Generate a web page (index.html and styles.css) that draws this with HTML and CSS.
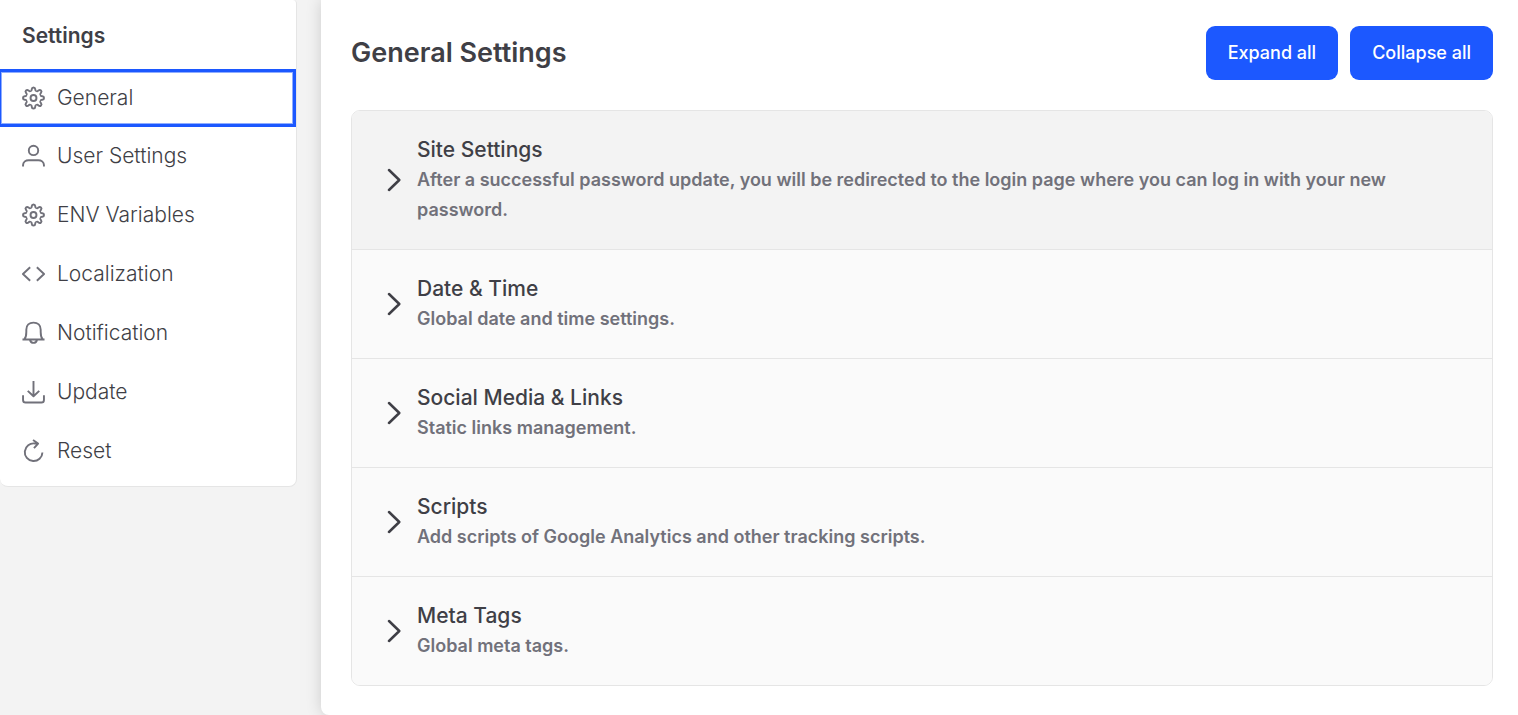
FILE: index.html
```html
<!DOCTYPE html>
<html lang="en">
<head>
<meta charset="utf-8">
<meta name="viewport" content="width=device-width, initial-scale=1">
<title>General Settings</title>
<link rel="stylesheet" href="styles.css">
</head>
<body>
<svg class="sprite" aria-hidden="true">
  <defs>
    <path id="tooth" d="M-3.200-7.700C-2.200-7.300-1.900-8-1.800-9.200C-1.600-11.600 1.600-11.600 1.800-9.200C1.900-8 2.200-7.300 3.200-7.700"/>
    <symbol id="gear" viewBox="-12 -12 24 24">
      <use href="#tooth"/>
      <use href="#tooth" transform="rotate(45)"/>
      <use href="#tooth" transform="rotate(90)"/>
      <use href="#tooth" transform="rotate(135)"/>
      <use href="#tooth" transform="rotate(180)"/>
      <use href="#tooth" transform="rotate(225)"/>
      <use href="#tooth" transform="rotate(270)"/>
      <use href="#tooth" transform="rotate(315)"/>
      <circle r="3.1"/>
    </symbol>
    <symbol id="chevron" viewBox="0 0 14 24"><path d="M2 2 12.300 12 2 22"/></symbol>
  </defs>
</svg>
<div class="layout">
  <aside class="sidebar">
    <h2 class="sidebar-title">Settings</h2>
    <nav class="menu" aria-label="Settings">
      <a class="menu-item is-active" href="#general" aria-current="page"><svg class="icon"><use href="#gear"/></svg>General</a>
      <a class="menu-item" href="#user"><svg class="icon" viewBox="0 0 24 24"><circle cx="12" cy="6.2" r="4.9"/><path d="M1.100 23v-1.500C1.100 18.300 4 16.500 7 16.500h10c3 0 5.900 1.800 5.900 5V23"/></svg>User Settings</a>
      <a class="menu-item" href="#env"><svg class="icon"><use href="#gear"/></svg>ENV Variables</a>
      <a class="menu-item" href="#localization"><svg class="icon" viewBox="0 0 24 24"><path d="M8.5 5 1 12l7.500 7M15.500 5 23 12l-7.500 7"/></svg>Localization</a>
      <a class="menu-item" href="#notification"><svg class="icon" viewBox="0 0 24 24"><path d="M.5 18.700h23M2.500 18.500C4 16.800 4.500 14.500 4.500 11V8.500C4.500 4 7.500 1.200 12 1.200s7.500 2.800 7.500 7.300V11c0 3.500.5 5.800 2 7.500M8.300 19c.5 2.200 1.800 3.300 3.700 3.300s3.200-1.100 3.700-3.300"/></svg>Notification</a>
      <a class="menu-item" href="#update"><svg class="icon" viewBox="0 0 24 24"><path d="M12 .5v15.500M6 10.800l6 5.700 6-5.700M1.100 15.500v4.800C1.100 22 2 23 3.700 23h16.600c1.700 0 2.600-1 2.600-2.700v-4.800"/></svg>Update</a>
      <a class="menu-item" href="#reset"><svg class="icon" viewBox="0 0 24 24"><path d="M17 4.200h-3.500A9.200 9.200 0 1 0 21.300 13.500M11.500.5 16.800 4.200 12.500 9"/></svg>Reset</a>
    </nav>
  </aside>
  <main class="content">
    <header class="content-header">
      <h1 class="content-title">General Settings</h1>
      <div class="actions">
        <button class="button" type="button">Expand all</button>
        <button class="button" type="button">Collapse all</button>
      </div>
    </header>
    <div class="accordion">
      <button class="panel is-hovered" type="button" aria-expanded="false">
        <svg class="chevron"><use href="#chevron"/></svg>
        <span class="panel-text"><span class="panel-title">Site Settings</span><span class="panel-description">After a successful password update, you will be redirected to the login page where you can log in with your new password.</span></span>
      </button>
      <button class="panel" type="button" aria-expanded="false">
        <svg class="chevron"><use href="#chevron"/></svg>
        <span class="panel-text"><span class="panel-title">Date &amp; Time</span><span class="panel-description">Global date and time settings.</span></span>
      </button>
      <button class="panel" type="button" aria-expanded="false">
        <svg class="chevron"><use href="#chevron"/></svg>
        <span class="panel-text"><span class="panel-title">Social Media &amp; Links</span><span class="panel-description">Static links management.</span></span>
      </button>
      <button class="panel" type="button" aria-expanded="false">
        <svg class="chevron"><use href="#chevron"/></svg>
        <span class="panel-text"><span class="panel-title">Scripts</span><span class="panel-description">Add scripts of Google Analytics and other tracking scripts.</span></span>
      </button>
      <button class="panel" type="button" aria-expanded="false">
        <svg class="chevron"><use href="#chevron"/></svg>
        <span class="panel-text"><span class="panel-title">Meta Tags</span><span class="panel-description">Global meta tags.</span></span>
      </button>
    </div>
  </main>
</div>
</body>
</html>
```
FILE: styles.css
```css
* { box-sizing: border-box; }
body {
  margin: 0;
  background: #f3f3f3;
  color: #3f3f46;
  font-family: Inter, "Liberation Sans", sans-serif;
}
h1, h2 { margin: 0; }
button { font: inherit; cursor: pointer; }
.sprite { position: absolute; width: 0; height: 0; }
.layout {
  display: grid;
  grid-template-columns: 297px minmax(0, 1fr);
  align-items: start;
  gap: 24px;
}
.sidebar {
  padding-bottom: 5px;
  background: #fff;
  border: solid #e5e5e5;
  border-width: 0 1px 1px 0;
  border-radius: 0 4px 8px 8px;
}
.sidebar-title {
  padding: 21px 22px 18px;
  font-size: 21px;
  line-height: 30px;
  font-weight: 600;
}
.menu { display: flex; flex-direction: column; }
.menu-item {
  display: flex;
  align-items: center;
  gap: 12px;
  min-height: 59px;
  padding: 0 22px 1px;
  color: #3f3f46;
  font-size: 21px;
  line-height: 30px;
  font-weight: 300;
  text-decoration: none;
}
.menu-item.is-active {
  min-height: 58px;
  padding: 0 21px;
  border: solid #1c58ff;
  border-width: 3px 3px 3px 1px;
  box-shadow: inset 0 0 0 1px #8fadff;
}
.icon {
  flex: none;
  width: 23px;
  height: 24px;
  fill: none;
  stroke: #71717a;
  stroke-width: 2;
  stroke-linejoin: round;
}
.content {
  padding: 26px 25px 29px 30px;
  background: #fff;
  border-radius: 0 0 0 8px;
  box-shadow: 0 0 16px rgba(0, 0, 0, 0.16);
}
.content-header {
  display: flex;
  align-items: center;
  justify-content: space-between;
  margin-bottom: 30px;
}
.content-title {
  font-size: 27px;
  line-height: 36px;
  font-weight: 600;
}
.actions { display: flex; gap: 12px; }
.button {
  padding: 12px 22px;
  border: 0;
  border-radius: 9px;
  background: #1c58ff;
  color: #fff;
  font-size: 18px;
  line-height: 30px;
  font-weight: 500;
}
.accordion {
  overflow: hidden;
  border: 1px solid #e5e5e5;
  border-radius: 9px;
}
.panel {
  display: flex;
  align-items: center;
  gap: 16px;
  width: 100%;
  padding: 24px 24px 24px 35px;
  border: 0;
  background: #fafafa;
  color: #3f3f46;
  line-height: 30px;
  text-align: left;
}
.panel + .panel { border-top: 1px solid #e5e5e5; }
.panel.is-hovered { background: #f3f3f3; }
.chevron {
  flex: none;
  width: 14px;
  height: 24px;
  fill: none;
  stroke: #3f3f46;
  stroke-width: 2.5;
  stroke-linecap: round;
  stroke-linejoin: round;
}
.panel-text { display: flex; flex-direction: column; }
.panel-title { font-size: 21px; font-weight: 500; }
.panel-description { color: #71717a; font-size: 18px; font-weight: 600; }
```
